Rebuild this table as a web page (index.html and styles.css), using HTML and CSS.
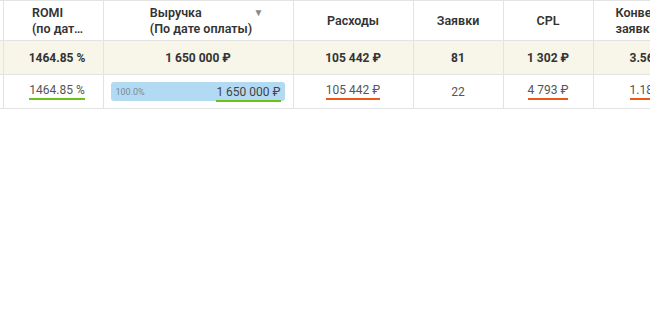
FILE: index.html
```html
<!DOCTYPE html>
<html lang="ru">
<head>
<meta charset="utf-8">
<link rel="stylesheet" href="styles.css">
</head>
<body>
<div class="viewport">
<table class="report">
  <colgroup>
    <col class="c-edge">
    <col class="c-romi">
    <col class="c-rev">
    <col class="c-exp">
    <col class="c-leads">
    <col class="c-cpl">
    <col class="c-conv">
  </colgroup>
  <thead>
    <tr>
      <th></th>
      <th class="h-romi"><div class="hblock"><div>ROMI</div><div class="ell">(по дате оплаты)</div></div></th>
      <th class="h-rev"><div class="hblock"><div>Выручка</div><div>(По дате оплаты)</div></div><span class="sort">▼</span></th>
      <th>Расходы</th>
      <th>Заявки</th>
      <th>CPL</th>
      <th class="h-conv"><div class="hblock"><div>Конверсия в</div><div>заявки</div></div></th>
    </tr>
  </thead>
  <tbody>
    <tr class="total">
      <td></td>
      <td class="romi">1464.85 %</td>
      <td>1 650 000 ₽</td>
      <td>105 442 ₽</td>
      <td>81</td>
      <td>1 302 ₽</td>
      <td class="conv">3.56 %</td>
    </tr>
    <tr class="data">
      <td></td>
      <td class="romi"><span class="u good">1464.85 %</span></td>
      <td class="barcell"><div class="bar"><span class="pct">100.0%</span><span class="u good">1 650 000 ₽</span></div></td>
      <td><span class="u bad">105 442 ₽</span></td>
      <td>22</td>
      <td><span class="u bad">4 793 ₽</span></td>
      <td class="conv"><span class="u bad">1.18 %</span></td>
    </tr>
  </tbody>
</table>
</div>
</body>
</html>
```

FILE: styles.css
```css
html, body {
  margin: 0;
  padding: 0;
  background: #ffffff;
}
.viewport {
  width: 650px;
  height: 311px;
  overflow: hidden;
}
.report {
  border-collapse: collapse;
  table-layout: fixed;
  width: 720px;
  font-family: Roboto, "Noto Sans", sans-serif;
  font-size: 12px;
  color: #444;
}
.c-edge { width: 3px; }
.c-romi { width: 100px; }
.c-rev { width: 190px; }
.c-exp { width: 120px; }
.c-leads { width: 90px; }
.c-cpl { width: 90px; }
.c-conv { width: 127px; }

.report th,
.report td {
  border: 1px solid #e3e3e3;
  padding: 0;
  text-align: center;
  white-space: nowrap;
}
.report th:first-child,
.report td:first-child {
  border-left: none;
}
.report th {
  height: 39px;
  font-weight: 600;
  color: #333;
  font-size: 12.5px;
  line-height: 16px;
  position: relative;
  vertical-align: middle;
}
.hblock {
  display: inline-block;
  text-align: left;
  vertical-align: middle;
}
.h-romi .hblock {
  width: 52px;
  margin-left: 10px;
}
.ell {
  overflow: hidden;
  text-overflow: ellipsis;
}
.h-rev .hblock {
  margin-left: 6px;
}
.report th.h-conv {
  text-align: left;
  padding-left: 22px;
}
.sort {
  position: absolute;
  top: 7px;
  right: 29px;
  font-size: 10px;
  color: #8a8a8a;
  line-height: 10px;
}
.total td {
  height: 33px;
  background: #f8f5e9;
  font-weight: 700;
  color: #333;
}
.data td {
  height: 33px;
  color: #555;
}
.romi {
  padding-left: 8px !important;
}
.conv {
  text-align: left !important;
  padding-left: 36px !important;
}
.u {
  display: inline-block;
  line-height: 14px;
  border-bottom: 2px solid transparent;
  padding-bottom: 1px;
}
.u.good { border-bottom-color: #6cc21a; }
.u.bad { border-bottom-color: #ec5a17; }
.barcell {
  padding: 0 8px 0 7px !important;
}
.bar {
  display: flex;
  align-items: center;
  justify-content: space-between;
  height: 19px;
  background: #b2daf2;
  border-radius: 3px;
  padding: 0 4px 0 5px;
}
.pct {
  font-size: 9px;
  color: #7a8a94;
}
.bar .u {
  color: #444;
  margin-top: 3px;
}
```
